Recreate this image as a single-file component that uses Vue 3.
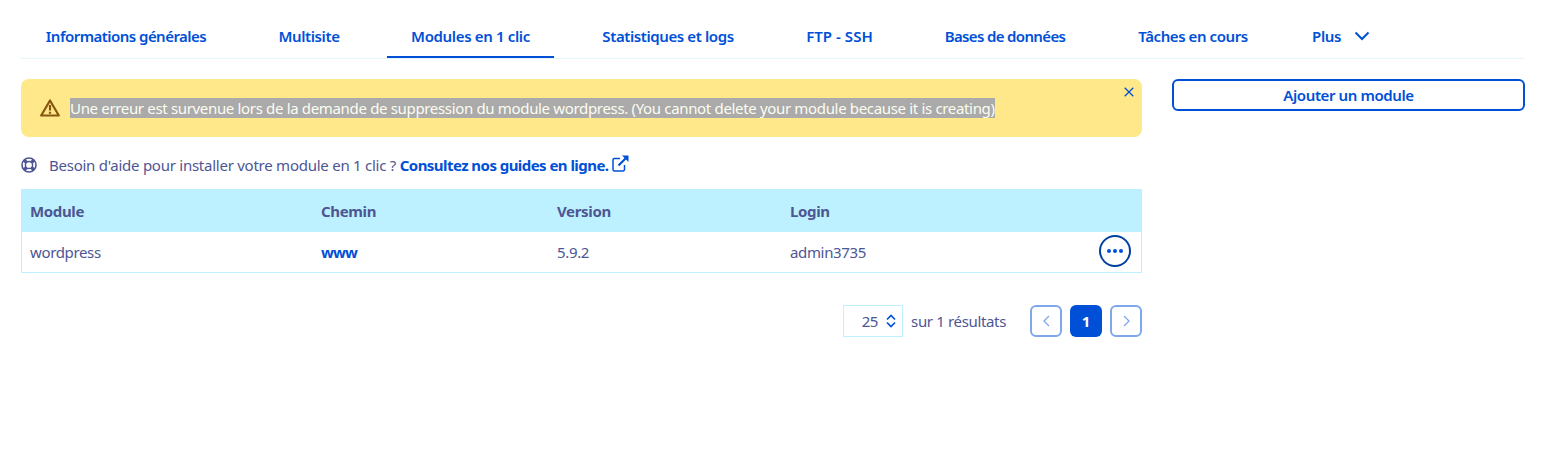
<script setup>
const tabs = [
  { label: 'Informations générales', w: 210, ls: -0.53 },
  { label: 'Multisite', w: 108, ls: -0.38 },
  { label: 'Modules en 1 clic', w: 167, active: true, ls: -0.35 },
  { label: 'Statistiques et logs', w: 180, ls: -0.4 },
  { label: 'FTP - SSH', w: 115, ls: 0.05 },
  { label: 'Bases de données', w: 168, ls: -0.65 },
  { label: 'Tâches en cours', w: 160, ls: -0.42 }
]
</script>

<template>
  <div class="page">
    <nav class="tabs">
      <a v-for="t in tabs" :key="t.label" class="tab" :class="{ active: t.active }" :style="{ width: t.w + 'px', letterSpacing: t.ls + 'px' }">{{ t.label }}</a>
      <a class="tab plus">Plus
        <svg width="16" height="10" viewBox="0 0 16 10"><path d="M1.500 1.500 8 8l6.500-6.500" fill="none" stroke="#0050d7" stroke-width="2"/></svg>
      </a>
    </nav>
    <div class="body">
      <main class="main">
        <div class="alert">
          <svg class="warn" width="20" height="18" viewBox="0 0 20 18"><path d="M10 1.500 1.200 16.500h17.600z" fill="none" stroke="#85570f" stroke-width="2.200" stroke-linejoin="round"/><path d="M10 6v5.500M10 12.800v2" fill="none" stroke="#85570f" stroke-width="2.200"/></svg>
          <span class="sel">Une erreur est survenue lors de la demande de suppression du module wordpress. (You cannot delete your module because it is creating)</span>
          <svg class="close" width="10" height="10" viewBox="0 0 10 10"><path d="M.7.700l8.600 8.600M9.300.700.700 9.300" stroke="#0050d7" stroke-width="1.300" fill="none"/></svg>
        </div>
        <p class="help">
          <svg class="buoy" width="16" height="16" viewBox="0 0 16 16"><circle cx="8" cy="8" r="7" fill="none" stroke="#4d5693" stroke-width="1.600"/><circle cx="8" cy="8" r="3.600" fill="none" stroke="#4d5693" stroke-width="1.500"/><path d="M3 3l2.500 2.500M13 3l-2.500 2.500M3 13l2.500-2.500M13 13l-2.500-2.500" stroke="#4d5693" stroke-width="3.200"/></svg>
          <span class="help-text">Besoin d'aide pour installer votre module en 1 clic ? <a class="link help-link">Consultez nos guides en ligne.</a></span>
          <svg class="ext" width="17" height="17" viewBox="0 0 17 17"><path d="M8 3.500H2.500A1.500 1.500 0 0 0 1 5v9.500A1.500 1.500 0 0 0 2.500 16H11a1.500 1.500 0 0 0 1.500-1.500V10" fill="none" stroke="#0050d7" stroke-width="1.500"/><path d="M6.500 10.500l7-7" fill="none" stroke="#0050d7" stroke-width="2.200"/><path d="M10 .500h6.500V7z" fill="#0050d7"/></svg>
        </p>
        <div class="table">
          <div class="row head">
            <div class="c1">Module</div><div class="c2">Chemin</div><div class="c3">Version</div><div class="c4">Login</div>
          </div>
          <div class="row">
            <div class="c1">wordpress</div><div class="c2"><a class="link www">www</a></div><div class="c3">5.9.2</div><div class="c4">admin3735</div>
            <button class="more"><i></i><i></i><i></i></button>
          </div>
        </div>
        <div class="pager">
          <div class="size">25
            <svg width="10" height="14" viewBox="0 0 10 14"><path d="M1 5.500l4-4 4 4M1 8.500l4 4 4-4" fill="none" stroke="#0050d7" stroke-width="1.700"/></svg>
          </div>
          <span class="count">sur 1 résultats</span>
          <button class="pg dim first"><svg width="7" height="12" viewBox="0 0 7 12"><path d="M6 1 1 6l5 5" fill="none" stroke="#7fa7eb" stroke-width="1.300"/></svg></button>
          <button class="pg cur">1</button>
          <button class="pg dim"><svg width="7" height="12" viewBox="0 0 7 12"><path d="M1 1l5 5-5 5" fill="none" stroke="#7fa7eb" stroke-width="1.300"/></svg></button>
        </div>
      </main>
      <aside class="side"><button class="add">Ajouter un module</button></aside>
    </div>
  </div>
</template>

<style>
html, body { margin: 0; background: #fff; }
</style>

<style scoped>
.page { width: 1504px; margin-left: 21px; font-family: "Noto Sans", sans-serif; font-size: 15px; color: #4d5693; letter-spacing: -0.35px; }
.tabs { display: flex; gap: 24px; height: 58px; border-bottom: 1px solid #e5f6fd; }
.tab { box-sizing: border-box; height: 58px; line-height: 73px; text-align: center; color: #0050d7; font-weight: 600; white-space: nowrap; }
.active { border-bottom: 2px solid #0050d7; }
.plus { display: flex; align-items: center; gap: 13px; padding-left: 15px; line-height: normal; padding-top: 14px; }
.body { display: flex; gap: 30px; padding-top: 20px; }
.main { width: 1121px; }
.side { width: 353px; }
.alert { position: relative; height: 58px; box-sizing: border-box; background: #ffe88a; border-radius: 8px; display: flex; align-items: center; padding: 0 0 0 19px; margin-bottom: 18px; }
.warn { flex: none; margin-right: 10px; }
.sel { background: #aaaaaa; color: #fdfdf0; white-space: nowrap; line-height: 20px; letter-spacing: -0.335px; }
.close { position: absolute; top: 8px; right: 8px; }
.help { display: flex; align-items: center; margin: 0 0 14px; height: 20px; }
.buoy { margin-right: 12px; }
.help-text { white-space: nowrap; letter-spacing: -0.25px; }
.ext { margin-left: 4px; margin-top: -4px; }
.link { color: #0050d7; font-weight: 700; }
.help-link { letter-spacing: -0.55px; }
.www { letter-spacing: -0.9px; }
.table { border: 1px solid #bef1ff; border-top: 0; }
.row { position: relative; display: flex; align-items: center; height: 40px; padding-left: 8px; }
.head { height: 43px; background: #bef1ff; margin: 0 -1px; padding-left: 9px; font-weight: 700; }
.c1 { width: 291px; } .c2 { width: 236px; } .c3 { width: 233px; }
.more { position: absolute; right: 10px; top: 3px; width: 32px; height: 32px; padding: 0 1px 0 0; border: 2px solid #00409f; border-radius: 50%; background: #fff; display: flex; align-items: center; justify-content: center; gap: 2px; }
.more i { width: 4px; height: 4px; border-radius: 50%; background: #0050d7; }
.pager { display: flex; align-items: center; justify-content: flex-end; margin-top: 32px; height: 32px; }
.size { box-sizing: border-box; width: 60px; height: 32px; border: 1px solid #bef1ff; display: flex; align-items: center; justify-content: flex-end; gap: 8px; padding-right: 6px; margin-right: 8px; padding-bottom: 1px; }
.count { margin-right: 24px; white-space: nowrap; }
.pg { box-sizing: border-box; width: 32px; height: 32px; border-radius: 6px; padding: 0; display: flex; align-items: center; justify-content: center; background: #fff; font: inherit; }
.dim { border: 2px solid #7fa7eb; }
.cur { margin: 0 8px; border: 0; background: #0050d7; color: #fff; font-weight: 700; }
.add { box-sizing: border-box; width: 100%; height: 32px; border: 2px solid #0050d7; border-radius: 6px; background: #fff; color: #0050d7; font: inherit; font-weight: 600; letter-spacing: -0.4px; }
</style>
